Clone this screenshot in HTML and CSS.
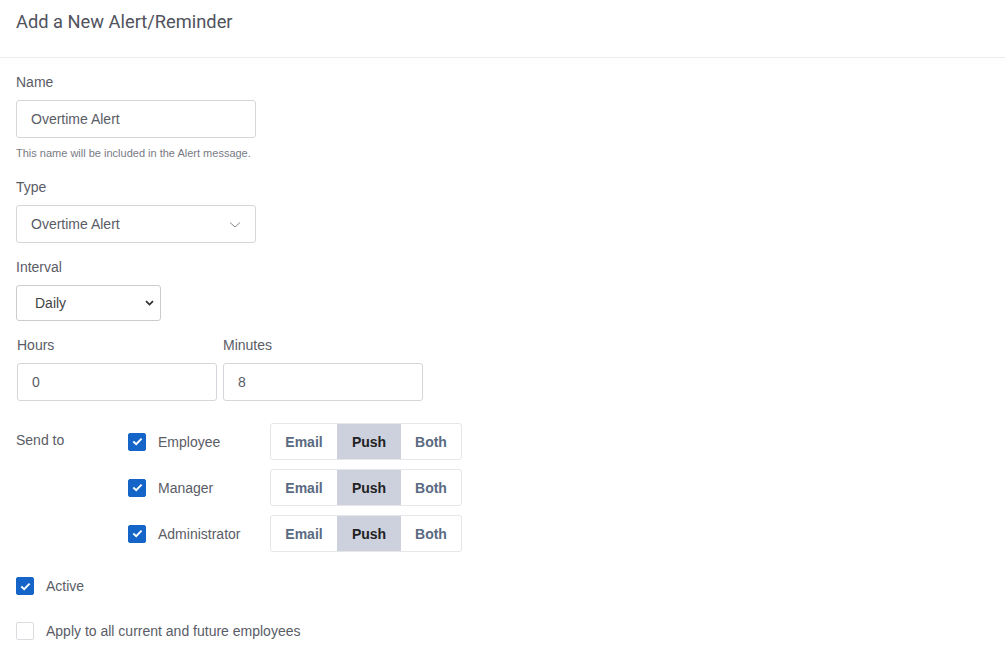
FILE: index.html
```html
<!DOCTYPE html>
<html>
<head>
<meta charset="utf-8">
<link rel="stylesheet" href="styles.css">
</head>
<body>
<div class="header"><h1 class="title">Add a New Alert/Reminder</h1></div>
<div class="form">
  <div class="field first">
    <label class="label">Name</label>
    <div class="input w240">Overtime Alert</div>
    <div class="help">This name will be included in the Alert message.</div>
  </div>
  <div class="field">
    <label class="label">Type</label>
    <div class="input w240 select">Overtime Alert
      <svg class="chev" width="12" height="8" viewBox="0 0 12 8"><path d="M1 1.5 L6 6 L11 1.5" fill="none" stroke="#8a8a8a" stroke-width="1"/></svg>
    </div>
  </div>
  <div class="field">
    <label class="label">Interval</label>
    <div class="native">Daily
      <svg class="chev2" width="9" height="6" viewBox="0 0 9 6"><path d="M1 1.2 L4.5 4.6 L8 1.2" fill="none" stroke="#333" stroke-width="1.8"/></svg>
    </div>
  </div>
  <div class="row2">
    <div class="col">
      <label class="label">Hours</label>
      <div class="input w200">0</div>
    </div>
    <div class="col">
      <label class="label">Minutes</label>
      <div class="input w200">8</div>
    </div>
  </div>
  <div class="sendto">
    <div class="send-label">Send to</div>
    <div class="recips">
      <div class="recip">
        <span class="cb on"><svg width="11" height="9" viewBox="0 0 11 9"><path d="M1.3 4.5 L4.2 7.2 L9.6 1.6" fill="none" stroke="#fff" stroke-width="1.9"/></svg></span>
        <span class="rname">Employee</span>
        <div class="seg"><span>Email</span><span class="sel">Push</span><span>Both</span></div>
      </div>
      <div class="recip">
        <span class="cb on"><svg width="11" height="9" viewBox="0 0 11 9"><path d="M1.3 4.5 L4.2 7.2 L9.6 1.6" fill="none" stroke="#fff" stroke-width="1.9"/></svg></span>
        <span class="rname">Manager</span>
        <div class="seg"><span>Email</span><span class="sel">Push</span><span>Both</span></div>
      </div>
      <div class="recip">
        <span class="cb on"><svg width="11" height="9" viewBox="0 0 11 9"><path d="M1.3 4.5 L4.2 7.2 L9.6 1.6" fill="none" stroke="#fff" stroke-width="1.9"/></svg></span>
        <span class="rname">Administrator</span>
        <div class="seg"><span>Email</span><span class="sel">Push</span><span>Both</span></div>
      </div>
    </div>
  </div>
  <div class="check-row active">
    <span class="cb on"><svg width="11" height="9" viewBox="0 0 11 9"><path d="M1.3 4.5 L4.2 7.2 L9.6 1.6" fill="none" stroke="#fff" stroke-width="1.9"/></svg></span>
    <span class="ctext">Active</span>
  </div>
  <div class="check-row apply">
    <span class="cb"></span>
    <span class="ctext">Apply to all current and future employees</span>
  </div>
</div>
</body>
</html>
```
FILE: styles.css
```css
* { box-sizing: border-box; }
body {
  margin: 0;
  background: #fff;
  font-family: "Liberation Sans", Arial, sans-serif;
  font-size: 14px;
  color: #5a5c66;
}
.header {
  height: 58px;
  border-bottom: 1px solid #ececef;
  padding: 11px 16px 0;
}
.title {
  margin: 0;
  font-family: Roboto, "Liberation Sans", sans-serif;
  font-weight: 400;
  font-size: 18.3px;
  line-height: 22px;
  color: #50525c;
}
.form {
  padding: 15px 16px 0;
}
.field { margin-bottom: 15px; }
.field.first { margin-bottom: 18px; }
.label {
  display: block;
  line-height: 18px;
  margin-bottom: 9px;
  color: #5a5c66;
}
.input {
  height: 38px;
  border: 1px solid #d6d6da;
  border-radius: 3px;
  padding: 0 14px 1px;
  display: flex;
  align-items: center;
  color: #5a5c66;
  position: relative;
}
.w240 { width: 240px; }
.w200 { width: 200px; }
.help {
  font-size: 11px;
  color: #787a84;
  margin-top: 8px;
  line-height: 14px;
}
.chev { position: absolute; right: 14px; top: 15px; }
.native {
  width: 145px;
  height: 36px;
  border: 1px solid #ccc;
  border-radius: 3px;
  padding: 0 6px 0 18px;
  display: flex;
  align-items: center;
  justify-content: space-between;
  color: #444;
}
.row2 {
  display: flex;
  gap: 6px;
  margin-left: 1px;
  margin-top: 5px;
}
.row2 .label { margin-bottom: 9px; }
.sendto {
  display: flex;
  margin-top: 22px;
}
.send-label {
  width: 112px;
  padding-top: 9px;
  line-height: 16px;
}
.recips { display: flex; flex-direction: column; gap: 9px; }
.recip { display: flex; align-items: center; }
.cb {
  width: 18px;
  height: 18px;
  border-radius: 2px;
  border: 1px solid #dcdce0;
  display: inline-flex;
  align-items: center;
  justify-content: center;
  flex: none;
}
.cb.on { background: #1565c8; border-color: #1565c8; }
.rname { width: 112px; margin-left: 12px; }
.seg {
  display: flex;
  height: 37px;
  border: 1px solid #e6e6ea;
  border-radius: 3px;
  overflow: hidden;
}
.seg span {
  display: flex;
  align-items: center;
  justify-content: center;
  font-weight: bold;
  color: #5a6a82;
  width: 66px;
}
.seg span.sel { background: #cdd0dd; color: #222; width: 64px; }
.seg span:last-child { width: 60px; }
.check-row { display: flex; align-items: center; }
.check-row .ctext { margin-left: 12px; }
.active { margin-top: 25px; }
.apply { margin-top: 27px; }
```
